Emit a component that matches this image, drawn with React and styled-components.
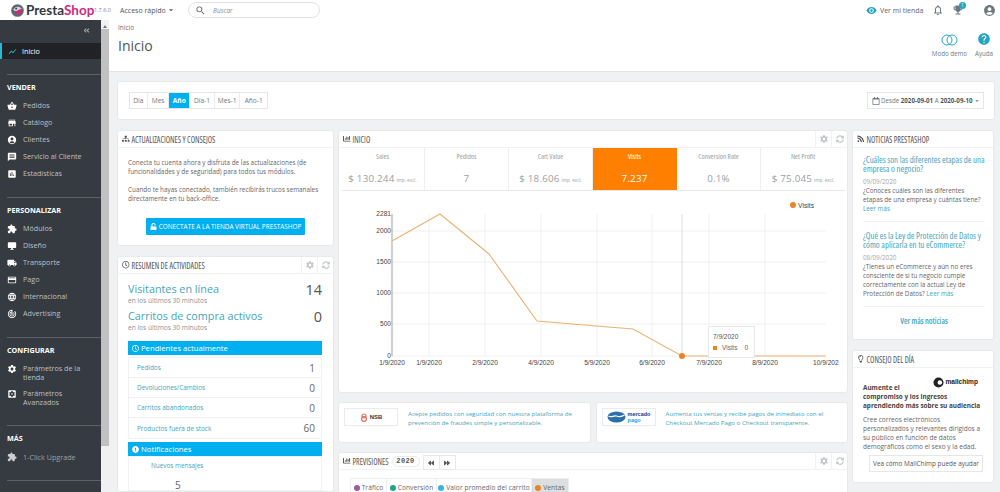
import React from 'react'
import styled, { createGlobalStyle } from 'styled-components'
import {
  MdShowChart, MdShoppingBasket, MdStore, MdAccountCircle, MdMessage, MdAssessment, MdExtension,
  MdDesktopWindows, MdLocalShipping, MdCreditCard, MdLanguage, MdSettings, MdSettingsApplications,
  MdVisibility, MdNotificationsNone, MdEmojiEvents, MdHelp, MdSearch, MdTrackChanges, MdArrowDropDown,
} from 'react-icons/md'
import {
  FaSitemap, FaRegClock, FaChartBar, FaRss, FaRegLightbulb, FaCog, FaSyncAlt, FaBackward, FaForward,
  FaUnlock, FaRegCalendar, FaExclamationCircle, FaAngleDoubleLeft,
} from 'react-icons/fa'

const Global = createGlobalStyle`
  html, body { margin: 0; height: 492px; overflow: hidden; background: #fff; }
  body { font-family: "Open Sans", "Liberation Sans", sans-serif; color: #6c6f72; }
  * { box-sizing: border-box; }
`
const LINK = '#45a5bb'
const narrow = `
  font-family: "Open Sans", sans-serif;
  font-stretch: 75%;
`

const Page = styled.div`
  width: 1000px;
  height: 492px;
  overflow: hidden;
  display: flex;
  flex-direction: column;
`
const TopBar = styled.header`
  height: 20px;
  flex: none;
  display: flex;
  align-items: center;
  padding-left: 11px;
  background: #fff;
`
const Logo = styled.div`
  display: flex;
  align-items: center;
  gap: 2px;
  width: 83px;
  font-family: Lato, sans-serif;
  font-size: 13.5px;
  font-weight: 700;
  color: #33383e;
  svg { flex: none; }
  span { color: #cf2a80; }
`
const Version = styled.div`
  width: 26px;
  font-size: 5.5px;
  color: #7d8488;
`
const Quick = styled.div`
  display: flex;
  align-items: center;
  width: 68px;
  font-size: 7px;
  color: #555;
`
const Search = styled.div`
  width: 132px;
  height: 16px;
  border: 1px solid #dfe2e3;
  border-radius: 9px;
  display: flex;
  align-items: center;
  gap: 7px;
  padding-left: 6px;
  font-size: 6.5px;
  font-style: italic;
  color: #8a9296;
  svg { font-size: 11px; color: #666; }
`
const TopRight = styled.div`
  margin-left: auto;
  display: flex;
  align-items: center;
  padding-right: 4px;
  color: #6c7a80;
`
const ShopLink = styled.div`
  display: flex;
  align-items: center;
  gap: 3px;
  width: 66px;
  font-size: 7px;
  color: #666;
  svg { font-size: 11px; color: #25a5c0; }
`
const TopIcon = styled.div`
  position: relative;
  width: ${p => p.$w}px;
  font-size: 12px;
  display: flex;
`
const Badge = styled.i`
  position: absolute;
  top: -2px;
  left: 7px;
  width: 7px;
  height: 7px;
  border-radius: 50%;
  background: #25a5c0;
  color: #fff;
  font: normal 5px/7px "Open Sans", sans-serif;
  text-align: center;
`
const Body = styled.div`
  flex: 1;
  min-height: 0;
  display: flex;
`
const Sidebar = styled.nav`
  width: 101px;
  flex: none;
  background: #363a41;
  padding-top: 23px;
  position: relative;
  color: #bcc0c4;
  font-size: 7.2px;
`
const Collapse = styled.div`
  position: absolute;
  top: 7px;
  left: 83px;
  font-size: 7px;
  color: #a2a6aa;
`
const ActiveItem = styled.div`
  height: 16px;
  display: flex;
  align-items: center;
  gap: 5px;
  padding-left: 6px;
  background: #202226;
  border-left: 2px solid #25b9d7;
  color: #fff;
  svg { font-size: 9px; color: #25b9d7; }
`
const Section = styled.div`
  margin: 15px 0 0 7px;
  padding: 7px 0 0;
  border-top: 1px solid #5d6166;
  & > h4 {
    margin: 0 0 5px;
    font-size: 7.2px;
    line-height: 10px;
    font-weight: 700;
    color: #fff;
  }
`
const Item = styled.div`
  display: flex;
  align-items: ${p => (p.$tall ? 'flex-start' : 'center')};
  min-height: 17px;
  gap: 6px;
  line-height: 8.6px;
  padding: ${p => (p.$tall ? '4px 6px 4px 0' : '0')};
  opacity: ${p => (p.$dim ? 0.75 : 1)};
  svg { flex: none; font-size: 10px; color: #fff; }
`
const Scrollbar = styled.div`
  width: 8px;
  flex: none;
  background: #f1f1f1;
  display: flex;
  flex-direction: column;
  align-items: center;
  padding-top: 3px;
  &::before {
    content: '';
    border: 2px solid transparent;
    border-bottom: 3px solid #777;
    height: 0;
  }
  &::after {
    content: '';
    width: 8px;
    height: 417px;
    margin-top: 1px;
    background: #c1c1c1;
  }
`
const Main = styled.main`
  flex: 1;
  min-width: 0;
  background: #eff1f2;
  display: flex;
  flex-direction: column;
  gap: 10px;
`
const PageHead = styled.div`
  height: 52px;
  flex: none;
  background: #fff;
  border-bottom: 1px solid #dfe3e4;
  padding: 3px 7px 0 9px;
  display: flex;
  justify-content: space-between;
`
const Crumb = styled.div`
  font-size: 6.5px;
  line-height: 9px;
  color: #6c6f72;
`
const Title = styled.h1`
  margin: 5px 0 0;
  font-size: 14px;
  line-height: 18px;
  font-weight: 400;
  color: #4d5458;
`
const HeadActions = styled.div`
  display: flex;
  gap: 8px;
  padding-top: 11px;
`
const HeadAction = styled.div`
  display: flex;
  flex-direction: column;
  align-items: center;
  font-size: 6.2px;
  line-height: 9px;
  color: #6c7a80;
  gap: 3px;
`
const HelpIcon = styled(MdHelp)`
  margin-top: -2px;
  color: #25a5c0;
`
const Content = styled.div`
  padding: 0 6px 0 9px;
  display: flex;
  flex-direction: column;
  gap: 12px;
`
const Toolbar = styled.div`
  height: 37px;
  background: #fff;
  border-radius: 2px;
  box-shadow: 0 0 2px rgba(0, 0, 0, 0.12);
  display: flex;
  align-items: center;
  justify-content: space-between;
  padding: 0 10px 0 11px;
`
const Tabs = styled.div`
  display: flex;
  height: 17px;
  width: 139px;
  border: 1px solid #e4e7e8;
`
const Tab = styled.div`
  width: ${p => p.$w}px;
  display: flex;
  align-items: center;
  justify-content: center;
  font-size: 6.6px;
  font-weight: ${p => (p.$on ? 700 : 400)};
  color: ${p => (p.$on ? '#fff' : '#6c7a80')};
  background: ${p => (p.$on ? '#00aff0' : '#fff')};
  border-right: 1px solid #e9ebec;
  &:last-child { border-right: 0; }
`
const DatePick = styled.div`
  width: 117px;
  height: 17px;
  border: 1px solid #e4e7e8;
  display: flex;
  align-items: center;
  padding-left: 4px;
  font-size: 6.2px;
  white-space: nowrap;
  color: #6c7a80;
  svg { flex: none; font-size: 8px; }
  svg:first-child { margin-right: 1px; }
  b { color: #50585c; }
`
const Columns = styled.div`
  display: grid;
  grid-template-columns: 215px 508px 140px;
  gap: 6px;
  align-items: start;
`
const Stack = styled.div`
  display: flex;
  flex-direction: column;
  gap: ${p => p.$gap}px;
`
const Card = styled.section`
  background: #fff;
  border-radius: 2px;
  box-shadow: 0 0 2px rgba(0, 0, 0, 0.12);
  height: ${p => (p.$h ? `${p.$h}px` : 'auto')};
  overflow: hidden;
`
const CardHead = styled.div`
  height: 17px;
  padding-left: 4px;
  border-bottom: 1px solid #f1f2f3;
  display: flex;
  align-items: center;
  gap: 2px;
  ${narrow}
  font-size: 8px;
  color: #555;
  white-space: nowrap;
  & > svg { font-size: 7.5px; flex: none; }
`
const CardTools = styled.div`
  margin-left: auto;
  display: flex;
  height: 100%;
  font-size: 8px;
  color: #c4c8ca;
`
const CardTool = styled.div`
  width: 16px;
  display: flex;
  align-items: center;
  justify-content: center;
  border-left: 1px solid #f1f2f3;
`
const Copy = styled.div`
  padding: 10px 10px 0;
  font-size: 6.35px;
  line-height: 9px;
  color: #666;
  p { margin: 0 0 9px; }
`
const Connect = styled.div`
  width: 159px;
  height: 17px;
  margin: 15px auto 0;
  background: #00aff0;
  border-radius: 1px;
  display: flex;
  align-items: center;
  justify-content: center;
  gap: 2px;
  color: #fff;
  font-size: 6.4px;
  white-space: nowrap;
  svg { font-size: 7px; }
`
const Activity = styled.div`
  padding: 6px 11px 0 10px;
`
const StatRow = styled.div`
  display: flex;
  justify-content: space-between;
  align-items: flex-start;
  height: 27px;
  em {
    font-style: normal;
    display: block;
    font-size: 10.8px;
    line-height: 17px;
    color: ${LINK};
  }
  small {
    display: block;
    font-size: 6.6px;
    line-height: 7px;
    color: #8a9296;
  }
  strong {
    font-size: 14.5px;
    line-height: 20px;
    font-weight: 400;
    color: #555;
  }
`
const Bar = styled.div`
  height: 14px;
  margin-top: ${p => p.$top}px;
  background: #00aff0;
  color: #fff;
  font-size: 7.7px;
  display: flex;
  align-items: center;
  gap: 2px;
  padding-left: 4px;
  svg { font-size: 7px; }
`
const PendRows = styled.div`
  margin-top: 2px;
  border: 1px solid #f0f1f2;
`
const PendRow = styled.div`
  height: 20px;
  padding: 0 6px 0 8px;
  display: flex;
  justify-content: space-between;
  align-items: center;
  border-bottom: 1px solid #f0f1f2;
  font-size: 6.4px;
  color: ${LINK};
  &:last-child { border-bottom: 0; }
  b { font-size: 10px; font-weight: 400; color: #666; }
`
const Notifs = styled.div`
  border: 1px solid #f0f1f2;
  padding: 4px 0 0 22px;
  font-size: 6.4px;
  line-height: 9px;
  color: ${LINK};
  b {
    display: block;
    margin: 11px 0 0 24px;
    font-size: 10px;
    font-weight: 400;
    color: #666;
  }
`
const Kpis = styled.div`
  margin: 0 2px;
  height: 43px;
  display: grid;
  grid-template-columns: repeat(6, 1fr);
  border-bottom: 1px solid #e7e9ea;
`
const Kpi = styled.div`
  display: flex;
  flex-direction: column;
  align-items: center;
  padding-top: 4px;
  background: ${p => (p.$on ? '#ff7f00' : 'transparent')};
  color: ${p => (p.$on ? '#fff' : '#9ba1a4')};
  border-right: 1px solid ${p => (p.$on ? '#ff7f00' : '#eef0f0')};
  &:last-child { border-right: 0; }
  label {
    ${narrow}
    font-size: 7.3px;
    line-height: 9px;
  }
  div {
    margin-top: 11px;
    font-size: 9.8px;
    line-height: 14px;
    white-space: nowrap;
    letter-spacing: 0.2px;
  }
  small { font-size: 4.6px; letter-spacing: 0; margin-left: 2px; }
`
const ChartBox = styled.div`
  position: relative;
  height: 202px;
  svg { display: block; }
`
const Tip = styled.div`
  position: absolute;
  left: 369px;
  top: 135px;
  width: 47px;
  height: 32px;
  background: #fff;
  border: 1px solid #e6e8e9;
  padding: 4px 0 0 4px;
  font-family: "Liberation Sans", sans-serif;
  font-size: 6.5px;
  line-height: 11px;
  color: #555;
  div { display: flex; align-items: center; gap: 5px; color: #666; }
  i { width: 4px; height: 4px; background: #e8852a; }
  b { font-weight: 400; margin-left: 2px; }
`
const PromoRow = styled.div`
  display: grid;
  grid-template-columns: 1fr 1fr;
  gap: 7px;
`
const Promo = styled.div`
  height: 39px;
  background: #fff;
  border-radius: 2px;
  box-shadow: 0 0 2px rgba(0, 0, 0, 0.12);
  display: flex;
  gap: 10px;
  padding: 5px 12px 0 5px;
  font-size: 6.15px;
  line-height: 9px;
  color: ${LINK};
  p { margin: 1px 0 0; }
`
const PromoLogo = styled.div`
  width: 54px;
  height: 18px;
  flex: none;
  border: 1px solid #e9ebec;
  display: flex;
  align-items: center;
  justify-content: center;
  gap: 2px;
  font: 700 6px/6px "Liberation Sans", sans-serif;
  color: #33383e;
  em { font-style: normal; color: #2d3277; font-size: 5.5px; }
  em span { display: block; color: #27a3e0; }
`
const YearPill = styled.div`
  margin-left: 1px;
  width: 28px;
  height: 11px;
  border: 1px solid #e7e9ea;
  border-radius: 6px;
  text-align: center;
  font: 700 7px/9px "Liberation Mono", monospace;
  color: #555;
  letter-spacing: 0.4px;
`
const ArrowGroup = styled.div`
  margin: 3px 0 0 1px;
  width: 33px;
  height: 15px;
  border: 1px solid #e7e9ea;
  display: flex;
  color: #555;
  font-size: 6px;
  span {
    flex: 1;
    display: flex;
    align-items: center;
    justify-content: center;
  }
  span + span { border-left: 1px solid #e7e9ea; }
`
const ForecastTabs = styled.div`
  display: flex;
  margin: 8px 0 0 12px;
`
const ForecastTab = styled.div`
  height: 18px;
  width: ${p => p.$w}px;
  display: flex;
  align-items: center;
  justify-content: center;
  gap: 2px;
  white-space: nowrap;
  font-size: 6.6px;
  letter-spacing: 0.1px;
  color: #666;
  background: ${p => (p.$on ? '#dcdedf' : '#fff')};
  border: 1px solid #eceeef;
  border-bottom: 0;
  margin-left: -1px;
  i { width: 6px; height: 6px; border-radius: 50%; background: ${p => p.$dot}; }
`
const News = styled.div`
  padding: 8px 8px 0 10px;
`
const NewsItem = styled.article`
  border-bottom: 1px solid #f0f1f2;
  padding-bottom: 8px;
  margin-bottom: ${p => p.$mb}px;
  font-size: 6.3px;
  line-height: 9px;
  color: #666;
  h5 {
    margin: 0 0 4px;
    ${narrow}
    font-size: 8.8px;
    font-weight: 400;
    line-height: 8.6px;
    color: ${LINK};
  }
  time { display: block; color: #a3a8ab; }
  a { color: ${LINK}; }
`
const MoreNews = styled.div`
  text-align: center;
  ${narrow}
  font-size: 8px;
  font-weight: 600;
  line-height: 10px;
  color: ${LINK};
  margin-top: 9px;
`
const TipBody = styled.div`
  padding: 5px 10px 0;
  font-size: 6.5px;
  line-height: 9px;
  color: #666;
  h6 {
    margin: 0 0 5px;
    font-size: 6.4px;
    line-height: 9px;
    font-weight: 700;
    color: #444;
    white-space: nowrap;
  }
  p { margin: 0 0 4px; white-space: nowrap; }
`
const Chimp = styled.div`
  display: flex;
  justify-content: flex-end;
  align-items: center;
  gap: 1px;
  height: 14px;
  margin: 2px 5px -6px 0;
  font: 700 6.6px/8px "Liberation Sans", sans-serif;
  color: #222;
  svg { width: 11px; height: 11px; }
`
const TipButton = styled.div`
  height: 17px;
  margin-left: 6px;
  border: 1px solid #e4e7e8;
  display: flex;
  align-items: center;
  justify-content: center;
  font-size: 6.4px;
  white-space: nowrap;
  color: #555;
`

const sections = [
  { title: 'VENDER', items: [[MdShoppingBasket, 'Pedidos'], [MdStore, 'Catálogo'], [MdAccountCircle, 'Clientes'], [MdMessage, 'Servicio al Cliente'], [MdAssessment, 'Estadísticas']] },
  { title: 'PERSONALIZAR', items: [[MdExtension, 'Módulos'], [MdDesktopWindows, 'Diseño'], [MdLocalShipping, 'Transporte'], [MdCreditCard, 'Pago'], [MdLanguage, 'Internacional'], [MdTrackChanges, 'Advertising']] },
  { title: 'CONFIGURAR', items: [[MdSettings, 'Parámetros de la tienda', true], [MdSettingsApplications, 'Parámetros Avanzados', true]] },
  { title: 'MÁS', items: [[MdExtension, '1-Click Upgrade', false, true]] },
]

const kpis = [
  ['Sales', '$ 130.244', 'imp. excl.'],
  ['Pedidos', '7'],
  ['Cart Value', '$ 18.606', 'imp. excl.'],
  ['Visits', '7.237', null, true],
  ['Conversion Rate', '0.1%'],
  ['Net Profit', '$ 75.045', 'imp. excl.'],
]

const yLabels = [['2281', 23], ['2000', 40], ['1500', 71], ['1000', 102], ['500', 133], ['0', 165]]
const xTicks = [[39, '1/9/2020'], [95, '2/9/2020'], [151, '4/9/2020'], [207, '5/9/2020'], [262, '6/9/2020'], [319, '7/9/2020'], [375, '8/9/2020']]

const Chart = () => (
  <svg width="508" height="202" viewBox="-51 0 508 202" fontFamily="Liberation Sans, sans-serif" fontSize="6.6" fill="#444">
    {yLabels.slice(1).map(([t, y]) => <line key={t} x1="2" x2="436" y1={y} y2={y} stroke="#f0f0f0" />)}
    {xTicks.map(([x]) => <line key={x} x1={x} x2={x} y1="23" y2="165" stroke="#f0f0f0" />)}
    <line x1="292" x2="292" y1="23" y2="165" stroke="#dedede" />
    <line x1="2" x2="2" y1="23" y2="165" stroke="#bbb" strokeWidth="1.4" />
    <polyline points="2,50 50,23 99,63 147,130 206,135 243,138 292,165 436,165" fill="none" stroke="#e9b374" strokeWidth="1.1" />
    <circle cx="292" cy="165" r="3" fill="#e8852a" />
    <circle cx="403" cy="14" r="3" fill="#e8852a" />
    <text x="408" y="16.5" fontSize="6.8">Visits</text>
    <g textAnchor="end">
      {yLabels.map(([t, y]) => <text key={t} x="1" y={y + 2}>{t}</text>)}
    </g>
    <g textAnchor="middle">
      <text x="2" y="173.5">1/9/2020</text>
      {xTicks.map(([x, t]) => <text key={t} x={x} y="173.5">{t}</text>)}
    </g>
    <text x="423" y="173.5">10/9/202</text>
  </svg>
)

export default function App() {
  return (
    <Page>
      <Global />
      <TopBar>
        <Logo>
          <svg width="13" height="13" viewBox="0 0 14 14">
            <circle cx="7" cy="7" r="6.8" fill="#5f686d" />
            <path d="M2.5 6a5 4.5 0 0 1 9 -1l-3 2.5H4z" fill="#cfd4d6" />
            <path d="M5 8l5-2.5 2 2.5a5 5 0 0 1-6 3z" fill="#cf2a80" />
            <circle cx="5.5" cy="5" r="0.9" fill="#2b2f33" />
          </svg>
          <div>Presta<span>Shop</span></div>
        </Logo>
        <Version>1.7.6.0</Version>
        <Quick>Acceso rápido<MdArrowDropDown size={10} /></Quick>
        <Search><MdSearch />Buscar</Search>
        <TopRight>
          <ShopLink><MdVisibility />Ver mi tienda</ShopLink>
          <TopIcon $w={20}><MdNotificationsNone /></TopIcon>
          <TopIcon $w={31}><MdEmojiEvents /><Badge>1</Badge></TopIcon>
          <TopIcon $w={13}><MdAccountCircle size={13} /></TopIcon>
        </TopRight>
      </TopBar>
      <Body>
        <Sidebar>
          <Collapse><FaAngleDoubleLeft /></Collapse>
          <ActiveItem><MdShowChart />Inicio</ActiveItem>
          {sections.map(s => (
            <Section key={s.title}>
              <h4>{s.title}</h4>
              {s.items.map(([Icon, label, tall, dim]) => (
                <Item key={label} $tall={tall} $dim={dim}><Icon />{label}</Item>
              ))}
            </Section>
          ))}
          <Section />
        </Sidebar>
        <Scrollbar />
        <Main>
          <PageHead>
            <div>
              <Crumb>Inicio</Crumb>
              <Title>Inicio</Title>
            </div>
            <HeadActions>
              <HeadAction>
                <svg width="17" height="12" viewBox="0 0 17 12" fill="none" stroke="#25a5c0" strokeWidth="1">
                  <circle cx="6" cy="6" r="5" /><circle cx="11" cy="6" r="5" />
                </svg>
                Modo demo
              </HeadAction>
              <HeadAction><HelpIcon size={14} />Ayuda</HeadAction>
            </HeadActions>
          </PageHead>
          <Content>
            <Toolbar>
              <Tabs>
                <Tab $w={18}>Día</Tab>
                <Tab $w={22}>Mes</Tab>
                <Tab $w={21} $on>Año</Tab>
                <Tab $w={25}>Día-1</Tab>
                <Tab $w={26}>Mes-1</Tab>
                <Tab $w={27}>Año-1</Tab>
              </Tabs>
              <DatePick>
                <FaRegCalendar />Desde&nbsp;<b>2020-09-01</b>&nbsp;A&nbsp;<b>2020-09-10</b>
                <MdArrowDropDown />
              </DatePick>
            </Toolbar>
            <Columns>
              <Stack $gap={12}>
                <Card $h={114}>
                  <CardHead><FaSitemap />ACTUALIZACIONES Y CONSEJOS</CardHead>
                  <Copy>
                    <p>Conecta tu cuenta ahora y disfruta de las actualizaciones (de funcionalidades y de seguridad) para todos tus módulos.</p>
                    <p>Cuando te hayas conectado, también recibirás trucos semanales directamente en tu back-office.</p>
                    <Connect><FaUnlock />CONECTATE A LA TIENDA VIRTUAL PRESTASHOP</Connect>
                  </Copy>
                </Card>
                <Card>
                  <CardHead>
                    <FaRegClock />RESUMEN DE ACTIVIDADES
                    <CardTools><CardTool><FaCog /></CardTool><CardTool><FaSyncAlt /></CardTool></CardTools>
                  </CardHead>
                  <Activity>
                    <StatRow>
                      <div><em>Visitantes en línea</em><small>en los últimos 30 minutos</small></div>
                      <strong>14</strong>
                    </StatRow>
                    <StatRow>
                      <div><em>Carritos de compra activos</em><small>en los últimos 30 minutos</small></div>
                      <strong>0</strong>
                    </StatRow>
                    <Bar $top={7}><FaRegClock />Pendientes actualmente</Bar>
                    <PendRows>
                      <PendRow>Pedidos<b>1</b></PendRow>
                      <PendRow>Devoluciones/Cambios<b>0</b></PendRow>
                      <PendRow>Carritos abandonados<b>0</b></PendRow>
                      <PendRow>Productos fuera de stock<b>60</b></PendRow>
                    </PendRows>
                    <Bar $top={3}><FaExclamationCircle />Notificaciones</Bar>
                    <Notifs>Nuevos mensajes<b>5</b></Notifs>
                  </Activity>
                </Card>
              </Stack>
              <Stack $gap={11}>
                <Card $h={261}>
                  <CardHead>
                    <FaChartBar />INICIO
                    <CardTools><CardTool><FaCog /></CardTool><CardTool><FaSyncAlt /></CardTool></CardTools>
                  </CardHead>
                  <Kpis>
                    {kpis.map(([label, value, note, on]) => (
                      <Kpi key={label} $on={on}>
                        <label>{label}</label>
                        <div>{value}{note && <small>{note}</small>}</div>
                      </Kpi>
                    ))}
                  </Kpis>
                  <ChartBox>
                    <Chart />
                    <Tip>7/9/2020<div><i />Visits<b>0</b></div></Tip>
                  </ChartBox>
                </Card>
                <PromoRow>
                  <Promo>
                    <PromoLogo>
                      <svg width="8" height="9" viewBox="0 0 8 9" fill="none" stroke="#d9735f" strokeWidth="1.2">
                        <circle cx="4" cy="3" r="2" /><circle cx="4" cy="6" r="2.4" />
                      </svg>
                      NSB
                    </PromoLogo>
                    <p>Acepte pedidos con seguridad con nuestra plataforma de prevención de fraudes simple y personalizable.</p>
                  </Promo>
                  <Promo>
                    <PromoLogo>
                      <svg width="19" height="12" viewBox="0 0 19 12">
                        <ellipse cx="9.5" cy="6" rx="9" ry="5.5" fill="#2d6fa8" />
                        <path d="M1.5 5c3 2 5-1 8 0s5 1 8-1" fill="none" stroke="#fff" strokeWidth="1.3" />
                      </svg>
                      <em>mercado<span>pago</span></em>
                    </PromoLogo>
                    <p>Aumenta tus ventas y recibe pagos de inmediato con el Checkout Mercado Pago o Checkout transparente.</p>
                  </Promo>
                </PromoRow>
                <Card>
                  <CardHead>
                    <FaChartBar />PREVISIONES
                    <YearPill>2020</YearPill>
                    <ArrowGroup><span><FaBackward /></span><span><FaForward /></span></ArrowGroup>
                    <CardTools><CardTool><FaCog /></CardTool><CardTool><FaSyncAlt /></CardTool></CardTools>
                  </CardHead>
                  <ForecastTabs>
                    <ForecastTab $w={37} $dot="#9e5ba1"><i />Tráfico</ForecastTab>
                    <ForecastTab $w={51} $dot="#1ba68d"><i />Conversión</ForecastTab>
                    <ForecastTab $w={96} $dot="#39b3d7"><i />Valor promedio del carrito</ForecastTab>
                    <ForecastTab $w={38} $dot="#e8852a" $on><i />Ventas</ForecastTab>
                  </ForecastTabs>
                </Card>
              </Stack>
              <Stack $gap={12}>
                <Card $h={208}>
                  <CardHead><FaRss />NOTICIAS PRESTASHOP</CardHead>
                  <News>
                    <NewsItem $mb={10}>
                      <h5>¿Cuáles son las diferentes etapas de una empresa o negocio?</h5>
                      <time>09/09/2020</time>
                      ¿Conoces cuáles son las diferentes etapas de una empresa y cuántas tiene? <a>Leer más</a>
                    </NewsItem>
                    <NewsItem $mb={0}>
                      <h5>¿Qué es la Ley de Protección de Datos y cómo aplicarla en tu eCommerce?</h5>
                      <time>08/09/2020</time>
                      ¿Tienes un eCommerce y aún no eres consciente de si tu negocio cumple correctamente con la actual Ley de Protección de Datos? <a>Leer más</a>
                    </NewsItem>
                    <MoreNews>Ver más noticias</MoreNews>
                  </News>
                </Card>
                <Card $h={131}>
                  <CardHead><FaRegLightbulb />CONSEJO DEL DÍA</CardHead>
                  <TipBody>
                    <Chimp>
                      <svg viewBox="0 0 12 12"><circle cx="6" cy="6" r="5.5" fill="#222" /><circle cx="7.5" cy="6" r="2.5" fill="#fff" /></svg>
                      mailchimp
                    </Chimp>
                    <h6>Aumente el<br />compromiso y los ingresos<br />aprendiendo más sobre su audiencia</h6>
                    <p>Cree correos electrónicos<br />personalizados y relevantes dirigidos a<br />su público en función de datos<br />demográficos como el sexo y la edad.</p>
                    <TipButton>Vea cómo MailChimp puede ayudar</TipButton>
                  </TipBody>
                </Card>
              </Stack>
            </Columns>
          </Content>
        </Main>
      </Body>
    </Page>
  )
}
